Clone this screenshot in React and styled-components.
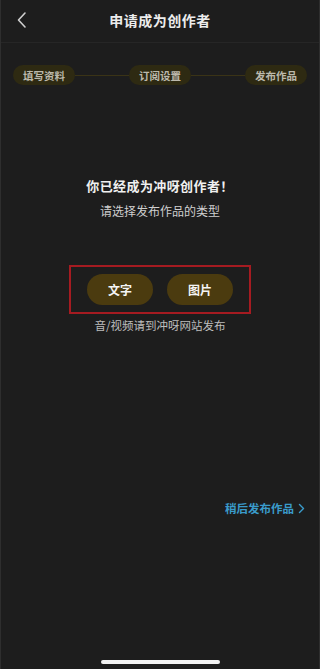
import styled, { createGlobalStyle } from "styled-components";

const GlobalStyle = createGlobalStyle`
  html, body {
    margin: 0;
    padding: 0;
    background: #1d1d1d;
  }
  body {
    font-family: "Noto Sans CJK SC", "Noto Sans", sans-serif;
  }
`;

const Screen = styled.div`
  width: 320px;
  height: 669px;
  box-sizing: border-box;
  background: #1d1d1d;
  border-left: 1px solid #2e2e2e;
  border-right: 1px solid #2e2e2e;
  display: flex;
  flex-direction: column;
  position: relative;
  overflow: hidden;
`;

const Header = styled.div`
  height: 42px;
  display: flex;
  align-items: center;
  justify-content: center;
  position: relative;
  border-bottom: 1px solid #262626;
`;

const Back = styled.div`
  position: absolute;
  left: 14px;
  top: 10px;
  width: 16px;
  height: 20px;
`;

const Title = styled.h1`
  margin: 0 0 2px;
  font-size: 14px;
  font-weight: 700;
  color: #ececec;
  letter-spacing: 0.5px;
`;

const Steps = styled.div`
  display: flex;
  align-items: center;
  padding: 0 12px 0 12px;
  margin-top: 22px;
`;

const Step = styled.div`
  height: 20px;
  padding: 0 10px;
  border-radius: 10px;
  background: #2e2a12;
  color: #bcb9ac;
  font-size: 10.5px;
  font-weight: 700;
  display: flex;
  align-items: center;
  white-space: nowrap;
`;

const Line = styled.div`
  flex: 1;
  height: 1px;
  background: #3a3316;
`;

const Body = styled.div`
  display: flex;
  flex-direction: column;
  align-items: center;
  margin-top: 91px;
`;

const Headline = styled.div`
  font-size: 13px;
  font-weight: 700;
  color: #f0f0f0;
  letter-spacing: 0.4px;
`;

const Sub = styled.div`
  margin-top: 7px;
  font-size: 12px;
  color: #cfcfcf;
`;

const Choices = styled.div`
  margin-top: 46px;
  width: 182px;
  height: 49px;
  box-sizing: border-box;
  border: 2px solid #a51b21;
  display: flex;
  align-items: center;
  justify-content: center;
  gap: 14px;
`;

const Choice = styled.button`
  width: 66px;
  height: 31px;
  border: none;
  border-radius: 16px;
  background: #4b3b0f;
  color: #f4f4f4;
  font-family: inherit;
  font-size: 12px;
  font-weight: 700;
  padding: 0;
`;

const Note = styled.div`
  margin-top: 3px;
  font-size: 11.5px;
  color: #bdbdbd;
`;

const Later = styled.div`
  margin-top: 167px;
  align-self: flex-end;
  margin-right: 14px;
  display: flex;
  align-items: center;
  gap: 4px;
  color: #3a9bcb;
  font-size: 11.5px;
  font-weight: 700;
`;

const HomeBar = styled.div`
  position: absolute;
  left: 100px;
  bottom: 5px;
  width: 119px;
  height: 4px;
  border-radius: 2px;
  background: #f2f2f2;
`;

export default function App() {
  return (
    <>
      <GlobalStyle />
      <Screen>
        <Header>
          <Back>
            <svg width="16" height="20" viewBox="0 0 16 20">
              <path d="M10 3 L3.5 10 L10 17" fill="none" stroke="#cfcfcf" strokeWidth="1.6" strokeLinecap="round" strokeLinejoin="round" />
            </svg>
          </Back>
          <Title>申请成为创作者</Title>
        </Header>
        <Steps>
          <Step>填写资料</Step>
          <Line />
          <Step>订阅设置</Step>
          <Line />
          <Step>发布作品</Step>
        </Steps>
        <Body>
          <Headline>你已经成为冲呀创作者！</Headline>
          <Sub>请选择发布作品的类型</Sub>
          <Choices>
            <Choice>文字</Choice>
            <Choice>图片</Choice>
          </Choices>
          <Note>音/视频请到冲呀网站发布</Note>
          <Later>
            稍后发布作品
            <svg width="7" height="11" viewBox="0 0 7 11">
              <path d="M1.5 1.5 L5.5 5.5 L1.5 9.5" fill="none" stroke="#3a9bcb" strokeWidth="1.4" strokeLinecap="round" strokeLinejoin="round" />
            </svg>
          </Later>
        </Body>
        <HomeBar />
      </Screen>
    </>
  );
}
